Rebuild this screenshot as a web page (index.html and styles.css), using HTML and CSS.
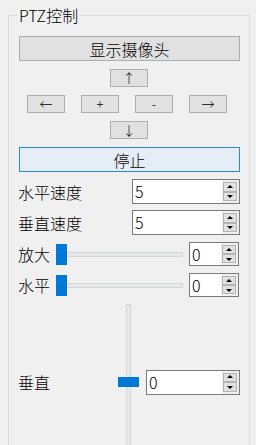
FILE: index.html
```html
<!DOCTYPE html>
<html lang="zh">
<head>
<meta charset="utf-8">
<link rel="stylesheet" href="styles.css">
</head>
<body>
<div class="group">
  <span class="legend">PTZ控制</span>
  <button class="btn wide">显示摄像头</button>
  <div class="pad-row center"><button class="btn arrow">↑</button></div>
  <div class="pad-row spread">
    <button class="btn arrow">←</button>
    <button class="btn arrow">+</button>
    <button class="btn arrow">-</button>
    <button class="btn arrow">→</button>
  </div>
  <div class="pad-row center"><button class="btn arrow">↓</button></div>
  <button class="btn wide stop">停止</button>

  <div class="row speed first">
    <span class="lbl">水平速度</span>
    <div class="spin w-speed"><span class="val">5</span><span class="sbtns"><span class="sb up"></span><span class="sb down"></span></span></div>
  </div>
  <div class="row speed second">
    <span class="lbl">垂直速度</span>
    <div class="spin w-speed"><span class="val">5</span><span class="sbtns"><span class="sb up"></span><span class="sb down"></span></span></div>
  </div>

  <div class="row slide first-slide">
    <span class="lbl short">放大</span>
    <div class="hslider"><div class="htrack"></div><div class="hhandle"></div></div>
    <div class="spin w-small"><span class="val">0</span><span class="sbtns"><span class="sb up"></span><span class="sb down"></span></span></div>
  </div>
  <div class="row slide">
    <span class="lbl short">水平</span>
    <div class="hslider"><div class="htrack"></div><div class="hhandle"></div></div>
    <div class="spin w-small"><span class="val">0</span><span class="sbtns"><span class="sb up"></span><span class="sb down"></span></span></div>
  </div>

  <div class="row vert">
    <span class="lbl vlbl">垂直</span>
    <div class="vslider"><div class="vtrack"></div><div class="vhandle"></div></div>
    <div class="spin w-vert"><span class="val">0</span><span class="sbtns"><span class="sb up"></span><span class="sb down"></span></span></div>
  </div>
</div>
</body>
</html>
```

FILE: styles.css
```css
html, body {
  margin: 0;
  padding: 0;
  background: #f0f0f0;
  overflow: hidden;
  width: 256px;
  height: 445px;
}

body {
  font-family: "Noto Sans CJK SC", "Noto Sans", sans-serif;
  font-size: 16px;
  font-weight: 300;
  color: #000;
}

.group {
  position: relative;
  box-sizing: border-box;
  margin: 15px 0 0 8px;
  width: 242px;
  height: 470px;
  border: 1px solid #dcdcdc;
  padding: 20px 9px 0 10px;
  display: flex;
  flex-direction: column;
}

.legend {
  position: absolute;
  top: -10px;
  left: 8px;
  padding: 0 2px;
  background: #f0f0f0;
  font-size: 16px;
  line-height: 18px;
}

.btn {
  box-sizing: border-box;
  margin: 0;
  padding: 0;
  font-family: "Noto Sans CJK SC", "Noto Sans", sans-serif;
  font-weight: 300;
  color: #000;
  background: #e1e1e1;
  border: 1px solid #adadad;
}

.wide {
  width: 221px;
  height: 25px;
  font-size: 16px;
  line-height: 22px;
}

.stop {
  margin-top: 8px;
  background: #e5eef7;
  border-color: #2a8ad8;
}

.pad-row {
  display: flex;
  margin-top: 8px;
  height: 18px;
}

.center {
  justify-content: center;
  padding-right: 1px;
}

.spread {
  gap: 16px;
  padding-left: 8px;
}

.arrow {
  width: 38px;
  height: 18px;
  font-size: 13px;
  line-height: 14px;
}

.row {
  display: flex;
  align-items: center;
}

.speed {
  height: 25px;
  justify-content: space-between;
}

.speed.first {
  margin-top: 7px;
}

.speed.second {
  margin-top: 6px;
}

.lbl {
  font-size: 16px;
  line-height: 20px;
  margin-left: -1px;
}

.spin {
  box-sizing: border-box;
  height: 100%;
  background: #fff;
  border: 1px solid #7a7a7a;
  display: flex;
  align-items: stretch;
}

.w-speed {
  width: 108px;
}

.w-small {
  width: 50px;
}

.w-vert {
  width: 94px;
  height: 25px;
}

.val {
  flex: 1;
  padding-left: 2px;
  font-size: 16px;
  line-height: 21px;
  display: flex;
  align-items: center;
}

.sbtns {
  width: 17px;
  background: #f0f0f0;
  padding: 2px 2px 2px 1px;
  box-sizing: border-box;
  display: flex;
  flex-direction: column;
}

.sb {
  flex: 1;
  position: relative;
  background: #e1e1e1;
  border: 1px solid #b4b4b4;
}

.sb::after {
  content: "";
  position: absolute;
  left: 50%;
  top: 50%;
  margin-left: -3px;
  width: 0;
  height: 0;
  border-left: 3px solid transparent;
  border-right: 3px solid transparent;
}

.sb.up::after {
  margin-top: -2px;
  border-bottom: 3px solid #000;
}

.sb.down::after {
  margin-top: -1px;
  border-top: 3px solid #000;
}

.slide {
  height: 24px;
  margin-top: 7px;
}

.slide.first-slide {
  margin-top: 7px;
}

.short {
  width: 38px;
}

.hslider {
  position: relative;
  width: 127px;
  height: 21px;
  margin-right: 6px;
  display: flex;
  align-items: center;
}

.htrack {
  box-sizing: border-box;
  width: 100%;
  height: 5px;
  background: #e7eaea;
  border: 1px solid #d6d6d6;
}

.hhandle {
  position: absolute;
  left: 0;
  top: 0;
  width: 11px;
  height: 21px;
  background: #0078d7;
}

.vert {
  margin-top: 7px;
  height: 156px;
}

.vlbl {
  width: 100px;
}

.vslider {
  position: relative;
  width: 21px;
  height: 100%;
  margin-right: 7px;
  display: flex;
  justify-content: center;
}

.vtrack {
  box-sizing: border-box;
  width: 5px;
  height: 100%;
  background: #e7eaea;
  border: 1px solid #d6d6d6;
}

.vhandle {
  position: absolute;
  left: 0;
  top: 73px;
  width: 21px;
  height: 10px;
  background: #0078d7;
}
```
